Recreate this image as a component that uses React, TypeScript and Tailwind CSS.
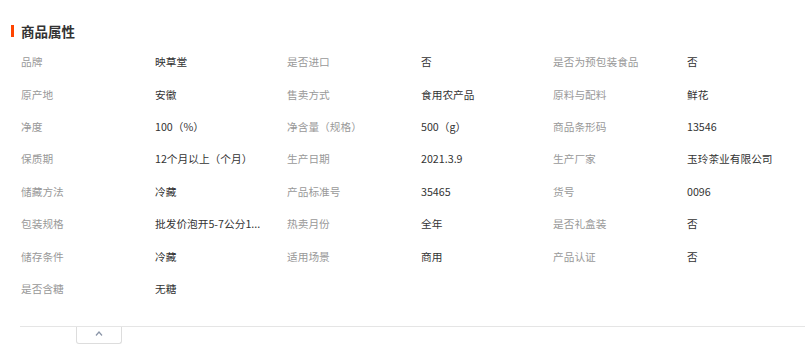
const rows: [string, string, string, string, string, string][] = [
  ["品牌", "映草堂", "是否进口", "否", "是否为预包装食品", "否"],
  ["原产地", "安徽", "售卖方式", "食用农产品", "原料与配料", "鲜花"],
  ["净度", "100（%）", "净含量（规格）", "500（g）", "商品条形码", "13546"],
  ["保质期", "12个月以上（个月）", "生产日期", "2021.3.9", "生产厂家", "玉玲茶业有限公司"],
  ["储藏方法", "冷藏", "产品标准号", "35465", "货号", "0096"],
  ["包装规格", "批发价泡开5-7公分1...", "热卖月份", "全年", "是否礼盒装", "否"],
  ["储存条件", "冷藏", "适用场景", "商用", "产品认证", "否"],
  ["是否含糖", "无糖", "", "", "", ""],
];

export default function App() {
  return (
    <div className="h-[364px] w-[805px] bg-white pt-[21px] font-['Noto_Sans_CJK_SC','Microsoft_YaHei',sans-serif]">
      <div className="flex h-5 items-center pl-[11px]">
        <span className="h-3 w-[3px] bg-[#ff4400]" />
        <h2 className="ml-[7px] text-[13.5px] font-bold leading-5 text-[#333]">商品属性</h2>
      </div>
      <div className="mt-[5px] pl-[21px]">
        {rows.map((r, i) => (
          <div
            key={i}
            className="grid h-[32.4px] grid-cols-[134px_132px_134px_132px_134px_1fr] items-center text-[10.7px] leading-4"
          >
            {r.map((cell, j) => (
              <span
                key={j}
                className={j % 2 === 0 ? "whitespace-nowrap text-[#999]" : "whitespace-nowrap text-[#333]"}
              >
                {cell}
              </span>
            ))}
          </div>
        ))}
      </div>
      <div className="ml-5 mt-[21px] border-t border-[#e5e5e5]">
        <button className="ml-[56px] flex h-[17px] w-[46px] items-start justify-center rounded-b-[3px] border border-t-0 border-[#ddd] bg-white pt-[4px]">
          <svg width="8" height="5" viewBox="0 0 8 5" fill="none">
            <polyline points="1,4.5 4,1 7,4.5" stroke="#8a95a8" strokeWidth="1.2" />
          </svg>
        </button>
      </div>
    </div>
  );
}
